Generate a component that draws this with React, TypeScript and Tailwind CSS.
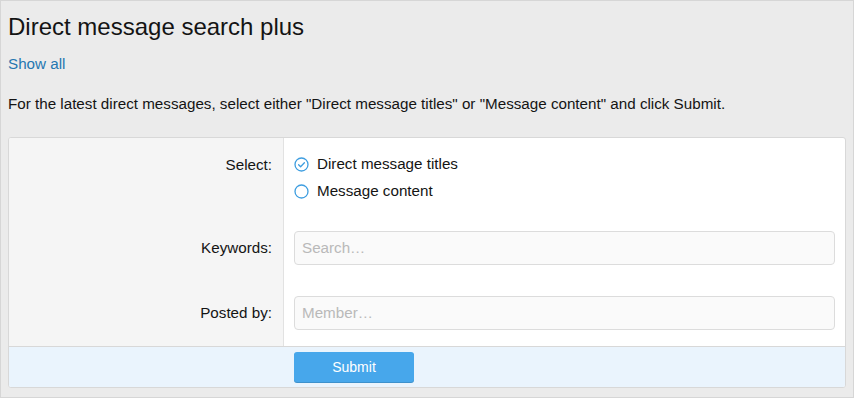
import type { ReactNode } from 'react';

function RadioIcon({ checked }: { checked?: boolean }) {
  return (
    <svg width="15" height="15" viewBox="0 0 15 15" className="shrink-0">
      <circle cx="7.5" cy="7.5" r="6.5" fill="white" stroke="#3f9ee0" strokeWidth="1.3" />
      {checked && (
        <path d="M4.6 7.7l2 2 3.8-4" fill="none" stroke="#3f9ee0" strokeWidth="1.3" strokeLinecap="round" strokeLinejoin="round" />
      )}
    </svg>
  );
}

function Row({ label, children, className }: { label: string; children: ReactNode; className: string }) {
  return (
    <div className="flex">
      <div className={`w-[275px] shrink-0 bg-[#f5f5f5] border-r border-[#e2e2e2] pr-[11px] text-right ${className}`}>
        {label}
      </div>
      <div className={`flex-1 pl-[10px] pr-[10px] ${className}`}>{children}</div>
    </div>
  );
}

export default function App() {
  return (
    <div
      className="w-[854px] h-[398px] bg-[#ebebeb] border border-[#d6d6d6] text-[#141414]"
      style={{ fontFamily: '"Liberation Sans", Arial, sans-serif' }}
    >
      <h1 className="text-[24px] leading-[28px] pt-[12px] pl-[7px]">Direct message search plus</h1>
      <a href="#" className="block text-[15.2px] leading-[20px] text-[#2577b1] pl-[7px] mt-[13px]">
        Show all
      </a>
      <p className="text-[15.2px] leading-[20px] pl-[7px] mt-[20px]">
        For the latest direct messages, select either "Direct message titles" or "Message content" and click Submit.
      </p>

      <div className="mx-[7px] mt-[23px] bg-white border border-[#d8d8d8] rounded-[3px] overflow-hidden text-[15.2px]">
        <div className="flex">
          <div className="w-[275px] shrink-0 bg-[#f5f5f5] border-r border-[#e2e2e2] pr-[11px] text-right pt-[13px] pb-[10px]">
            <div className="leading-[27px]">Select:</div>
          </div>
          <div className="flex-1 pl-[10px] pt-[13px] pb-[10px]">
            <div className="flex items-center gap-[8px] h-[27px]">
              <RadioIcon checked />
              <span>Direct message titles</span>
            </div>
            <div className="flex items-center gap-[8px] h-[27px]">
              <RadioIcon />
              <span>Message content</span>
            </div>
          </div>
        </div>

        <Row label="Keywords:" className="pt-[16px] pb-[15px] leading-[34px]">
          <input
            placeholder="Search…"
            className="w-full h-[34px] rounded-[4px] border border-[#dcdcdc] bg-[#fafafa] px-[7px] text-[15.2px] placeholder:text-[#b9b9b9] outline-none"
          />
        </Row>

        <Row label="Posted by:" className="pt-[16px] pb-[16px] leading-[34px]">
          <input
            placeholder="Member…"
            className="w-full h-[34px] rounded-[4px] border border-[#dcdcdc] bg-[#fafafa] px-[7px] text-[15.2px] placeholder:text-[#b9b9b9] outline-none"
          />
        </Row>

        <div className="border-t border-[#d8d8d8] bg-[#eaf4fd] pl-[285px] pt-[5px] pb-[5px]">
          <button className="w-[120px] h-[30px] rounded-[3px] bg-[#47a7eb] text-white text-[14px] shadow-[0_1px_0_#3d91cc]">
            Submit
          </button>
        </div>
      </div>
    </div>
  );
}
